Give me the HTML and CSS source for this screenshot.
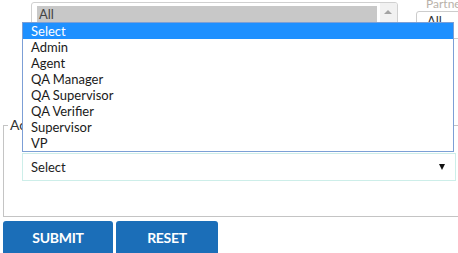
FILE: index.html
```html
<!DOCTYPE html>
<html lang="en">
<head>
    <meta charset="UTF-8">
    <title>User Filter</title>
    <meta content="width=device-width, initial-scale=1" name="viewport">
    <link rel="stylesheet" href="styles.css">
</head>
<body>
<div class="page">
    <div class="filters">
        <div class="listbox">
            <div class="options">
                <div class="option selected">All</div>
                <div class="option">Team A</div>
                <div class="option">Team B</div>
                <div class="option">Team C</div>
            </div>
            <div class="scrollbar"><span class="up"></span></div>
        </div>
        <div class="partner">
            <label class="label">Partner</label>
            <div class="mini-select">All</div>
        </div>
    </div>
    <fieldset class="group">
        <legend>Access Level</legend>
        <div class="group-body">
            <div class="select">
                <span>Select</span>
                <span class="arrow"></span>
            </div>
        </div>
    </fieldset>
    <div class="actions">
        <button class="btn">SUBMIT</button>
        <button class="btn reset">RESET</button>
    </div>
    <div class="dropdown">
        <div class="item active">Select</div>
        <div class="item">Admin</div>
        <div class="item">Agent</div>
        <div class="item">QA Manager</div>
        <div class="item">QA Supervisor</div>
        <div class="item">QA Verifier</div>
        <div class="item">Supervisor</div>
        <div class="item">VP</div>
    </div>
</div>
</body>
</html>
```

FILE: styles.css
```css
* {
    box-sizing: border-box;
}

body {
    margin: 0;
    font-family: Lato, "Liberation Sans", sans-serif;
    font-size: 13px;
    color: #222;
    background: #fff;
    overflow: hidden;
}

.page {
    position: relative;
    width: 458px;
    height: 253px;
    overflow: hidden;
}

.filters {
    display: flex;
    height: 118px;
}

.listbox {
    display: flex;
    flex-shrink: 0;
    margin: 2px 0 0 31px;
    width: 367px;
    height: 110px;
    border: 1px solid #d0d0d0;
    border-radius: 3px;
    overflow: hidden;
}

.options {
    flex: 1;
    padding: 3px 3px 0 5px;
}

.option {
    height: 16px;
    line-height: 16px;
    padding-left: 2px;
    color: #333;
}

.option.selected {
    background-color: #c8c8c8;
    color: #444;
}

.scrollbar {
    width: 17px;
    background-color: #f1f1f1;
    position: relative;
}

.scrollbar .up {
    position: absolute;
    top: 7px;
    left: 4px;
    border-left: 4px solid transparent;
    border-right: 4px solid transparent;
    border-bottom: 4px solid #a3a3a3;
}

.partner {
    flex-shrink: 0;
    margin-left: 18px;
}

.partner .label {
    display: block;
    margin: -1px 0 0 10px;
    height: 12px;
    line-height: 10px;
    font-size: 12px;
    color: #b9b2aa;
}

.mini-select {
    width: 60px;
    height: 28px;
    border: 1px solid #ccc;
    border-radius: 3px;
    padding: 1px 0 0 10px;
    color: #333;
}

.group {
    margin: 0 -40px 0 3px;
    padding: 0;
    border: 1px solid #c4c4c4;
    height: 99px;
}

.group legend {
    margin-left: 4px;
    padding: 0 2px;
    line-height: 14px;
    font-size: 14px;
    color: #333;
}

.group-body {
    padding: 21px 0 0 18px;
}

.select {
    display: flex;
    justify-content: space-between;
    align-items: center;
    width: 434px;
    height: 28px;
    border: 1px solid #cdeee9;
    padding: 0 10px 0 8px;
    color: #222;
}

.select .arrow {
    border-left: 3px solid transparent;
    border-right: 3px solid transparent;
    border-top: 6px solid #111;
}

.actions {
    display: flex;
    gap: 3px;
    margin: 4px 0 0 3px;
}

.btn {
    width: 110px;
    height: 34px;
    padding: 0;
    border: 0;
    border-radius: 3px;
    background-color: #1b6eb8;
    color: #fff;
    font-family: Lato, "Liberation Sans", sans-serif;
    font-weight: bold;
    font-size: 14px;
    letter-spacing: -0.3px;
    line-height: 30px;
    text-align: center;
}

.btn.reset {
    width: 102px;
}

.dropdown {
    position: absolute;
    left: 22px;
    top: 22px;
    width: 432px;
    border: 1px solid #7c9fd6;
    background-color: #fff;
}

.dropdown .item {
    height: 16px;
    line-height: 16px;
    padding-left: 8px;
    color: #1a1a1a;
}

.dropdown .item.active {
    background-color: #1e90ff;
    color: #fff;
}
```
